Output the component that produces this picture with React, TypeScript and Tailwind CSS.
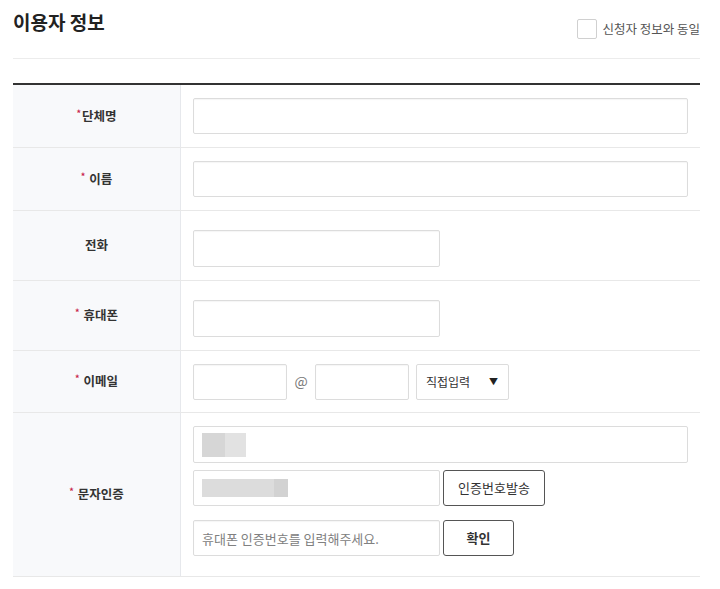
import React from "react";

const font = { fontFamily: '"Noto Sans CJK KR", "Noto Sans", sans-serif' };

function Label({ text, required, tight }: { text: string; required?: boolean; tight?: boolean }) {
  return (
    <div className="flex items-center justify-center bg-[#f8f9fb] border-r border-[#e6e8ec] text-[12.5px] font-bold text-[#333]">
      {required && (
        <span className={`text-[#c8254b] text-[9px] -mt-[5px] ${tight ? "mr-[1px]" : "mr-[4px]"}`}>*</span>
      )}
      <span>{text}</span>
    </div>
  );
}

function Input({ className = "", placeholder }: { className?: string; placeholder?: string }) {
  return (
    <input
      type="text"
      placeholder={placeholder}
      className={`h-[36px] border border-[#dcdcdc] rounded-[2px] bg-white px-[8px] text-[13px] text-[#333] placeholder:text-[#808080] outline-none shadow-[inset_0_1px_1px_rgba(0,0,0,0.04)] ${className}`}
      style={font}
    />
  );
}

function Row({ children, className = "" }: { children: React.ReactNode; className?: string }) {
  return <div className={`grid grid-cols-[168px_1fr] border-b border-[#e8e8e8] ${className}`}>{children}</div>;
}

export default function App() {
  return (
    <div className="w-[720px] h-[589px] bg-white px-[13px] pr-[20px]" style={font}>
      {/* header */}
      <div className="flex items-start justify-between h-[59px] border-b border-[#ececec]">
        <h2 className="pt-[8px] text-[19px] leading-[28px] font-bold text-[#222]">이용자 정보</h2>
        <label className="mt-[19px] flex items-center gap-[5px] text-[12.5px] text-[#555]">
          <span className="w-[20px] h-[20px] border border-[#d0d0d0] rounded-[2px] bg-white" />
          신청자 정보와 동일
        </label>
      </div>

      <div className="mt-[24px] border-t-2 border-[#333]">
        <Row className="h-[63px]">
          <Label text="단체명" required tight />
          <div className="flex items-center pl-[12px] pr-[12px]">
            <Input className="w-full" />
          </div>
        </Row>
        <Row className="h-[63px]">
          <Label text="이름" required />
          <div className="flex items-center pl-[12px] pr-[12px]">
            <Input className="w-full" />
          </div>
        </Row>
        <Row className="h-[70px]">
          <Label text="전화" />
          <div className="flex items-start pl-[12px] pt-[19px]">
            <Input className="w-[247px] h-[37px]" />
          </div>
        </Row>
        <Row className="h-[70px]">
          <Label text="휴대폰" required />
          <div className="flex items-start pl-[12px] pt-[19px]">
            <Input className="w-[247px] h-[37px]" />
          </div>
        </Row>
        <Row className="h-[62px]">
          <Label text="이메일" required />
          <div className="flex items-center pl-[12px]">
            <Input className="w-[94px]" />
            <span className="w-[28px] text-center text-[14px] text-[#777]">@</span>
            <Input className="w-[94px]" />
            <div className="ml-[7px] w-[93px] h-[36px] border border-[#dcdcdc] rounded-[2px] flex items-center justify-between pl-[9px] pr-[10px] text-[12px] text-[#333]">
              <span>직접입력</span>
              <span className="text-[9px] text-[#222]">▼</span>
            </div>
          </div>
        </Row>
        <Row className="h-[164px]">
          <Label text="문자인증" required />
          <div className="flex flex-col pl-[12px] pr-[12px] pt-[13px]">
            <div className="h-[37px] w-full border border-[#dcdcdc] rounded-[2px] flex items-center pl-[8px]">
              <div className="flex h-[24px]">
                <div className="w-[23px] bg-[#d6d6d6]" />
                <div className="w-[21px] bg-[#e2e2e2]" />
              </div>
            </div>
            <div className="mt-[7px] flex gap-[3px]">
              <div className="h-[36px] w-[247px] border border-[#dcdcdc] rounded-[2px] flex items-center pl-[8px]">
                <div className="flex h-[18px]">
                  <div className="w-[72px] bg-[#dcdcdc]" />
                  <div className="w-[14px] bg-[#d2d2d2]" />
                </div>
              </div>
              <button className="h-[36px] w-[102px] border border-[#555] rounded-[3px] bg-white text-[13px] text-[#333]">
                인증번호발송
              </button>
            </div>
            <div className="mt-[14px] flex gap-[3px]">
              <Input className="w-[247px]" placeholder="휴대폰 인증번호를 입력해주세요." />
              <button className="h-[36px] w-[71px] border border-[#555] rounded-[3px] bg-white text-[13px] font-bold text-[#333]">
                확인
              </button>
            </div>
          </div>
        </Row>
      </div>
    </div>
  );
}
